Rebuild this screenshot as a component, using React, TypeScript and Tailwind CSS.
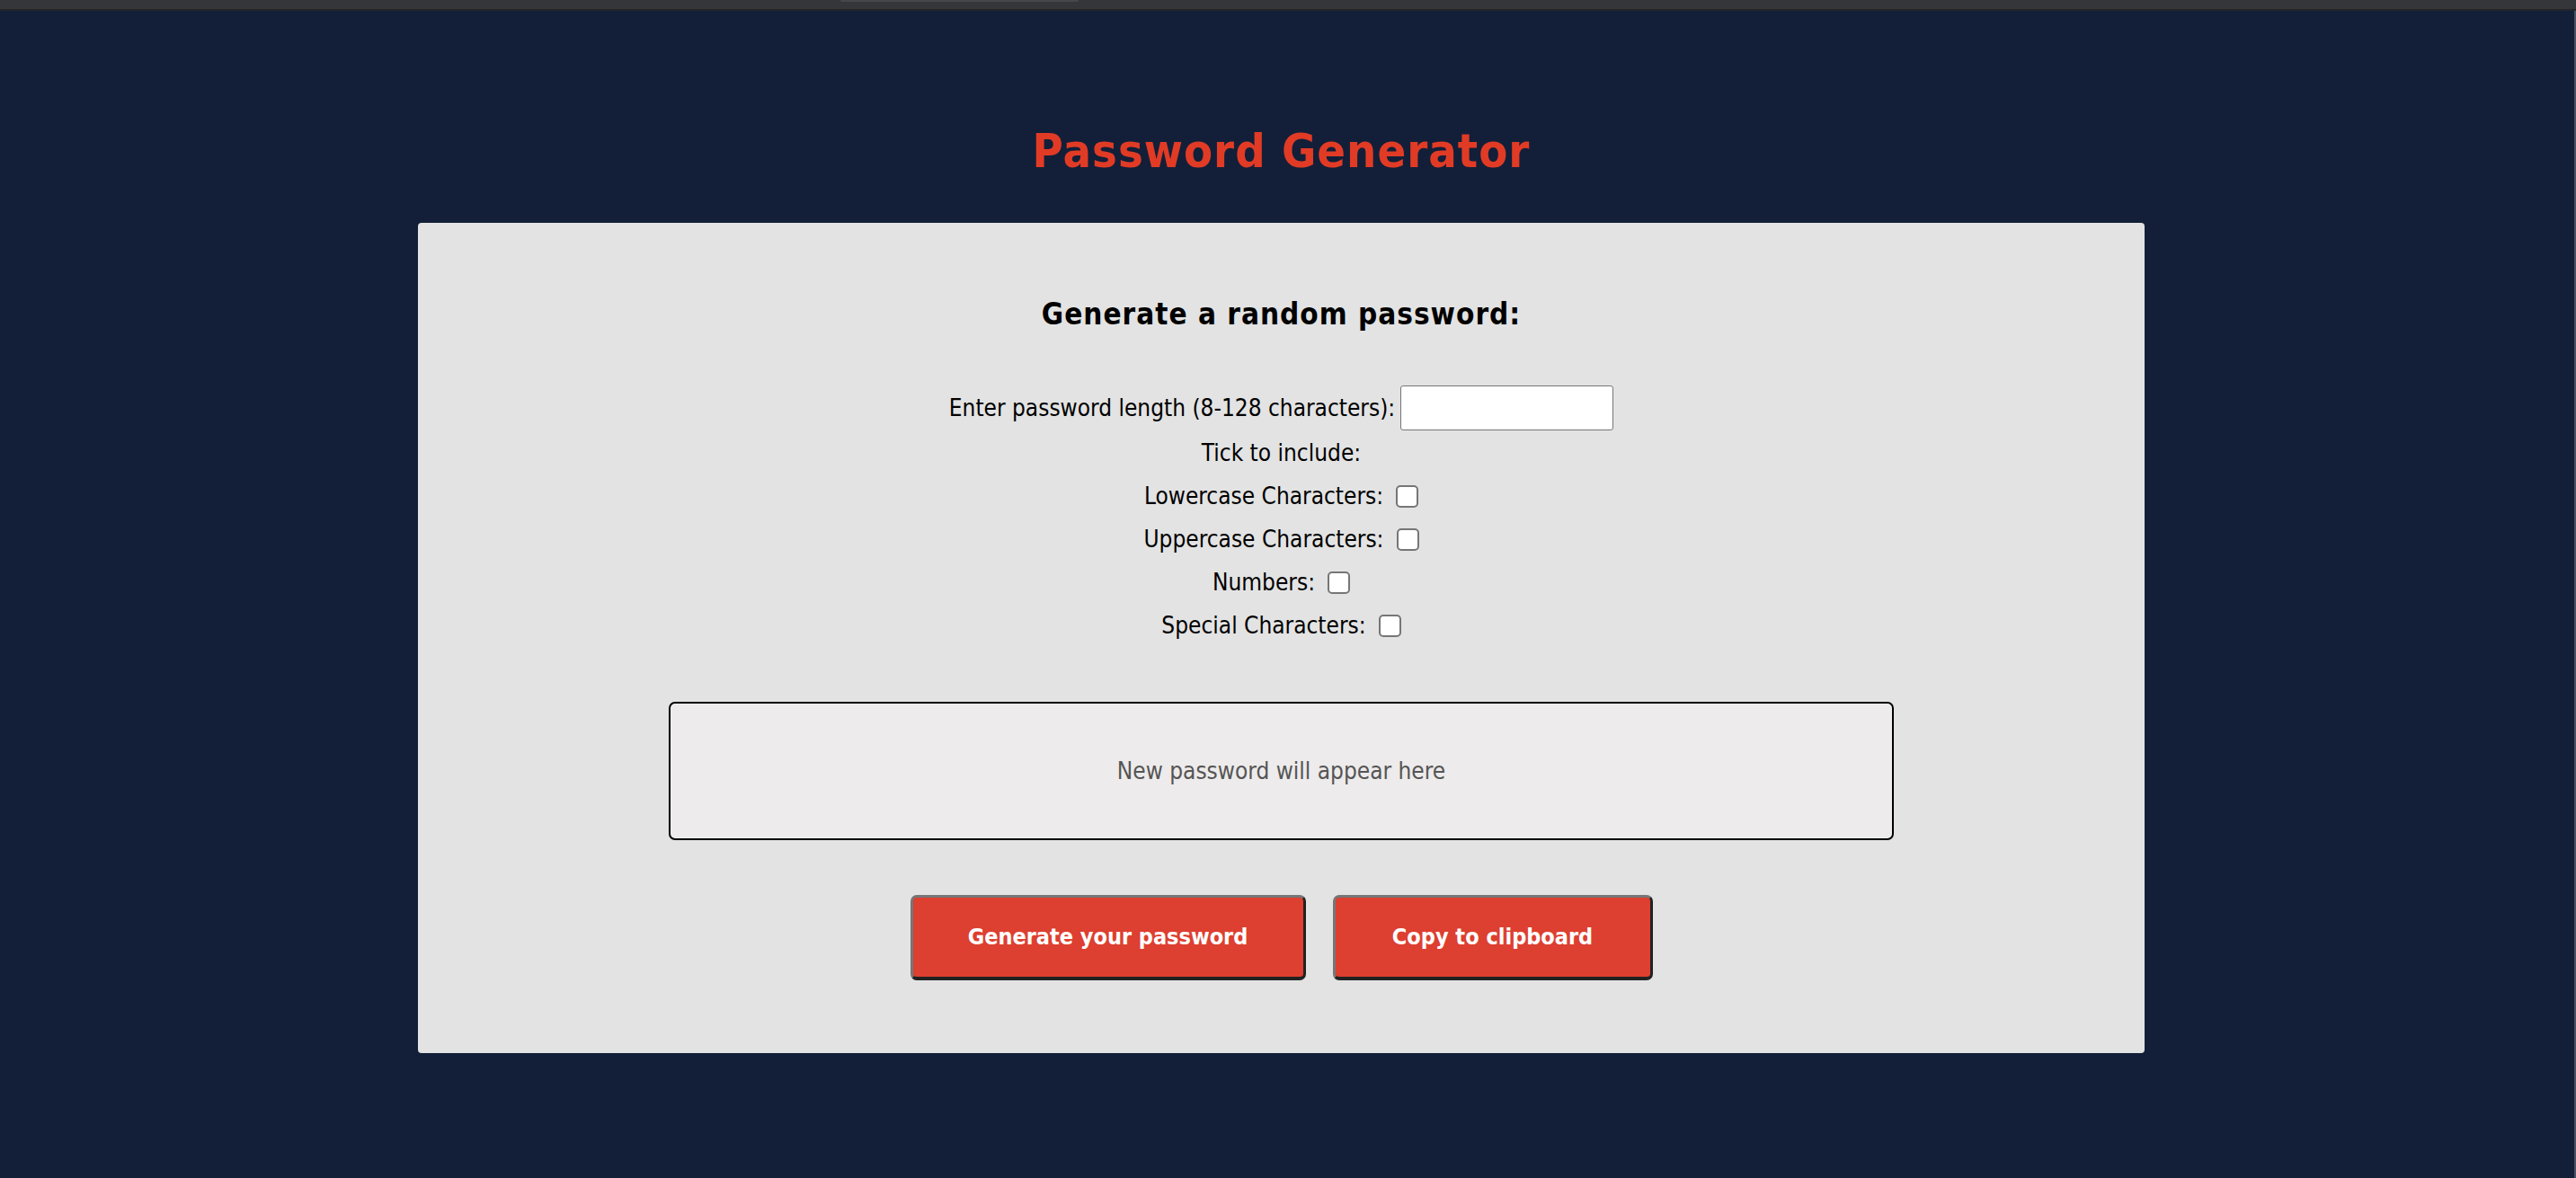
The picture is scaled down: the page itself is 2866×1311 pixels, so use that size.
import { useState } from "react";

const font = { fontFamily: '"DejaVu Sans Condensed", "Liberation Sans", sans-serif' };

const options = [
  { id: "lower", label: "Lowercase Characters:" },
  { id: "upper", label: "Uppercase Characters:" },
  { id: "numbers", label: "Numbers:" },
  { id: "special", label: "Special Characters:" },
];

export default function App() {
  const [length, setLength] = useState("");
  const [checked, setChecked] = useState<Record<string, boolean>>({});

  return (
    <div className="min-h-screen bg-[#131f38] flex flex-col" style={font}>
      {/* browser chrome strip */}
      <div className="h-[10px] bg-[#35363a] flex">
        <div className="ml-[935px] w-[265px] h-[2px] bg-[#46474b] rounded-b-md" />
      </div>
      <div className="h-[2px] bg-[#242527]" />

      <div className="flex flex-1">
        <main className="flex-1 flex flex-col items-center pr-[13px] pb-[139px]">
          <h1 className="mt-[124px] h-[64px] text-[52px] leading-[64px] font-bold tracking-[1px] text-[#e13b26]">
            Password Generator
          </h1>

          <section className="mt-[48px] w-[1921px] bg-[#e3e3e3] rounded-[4px] pt-[81px] pb-[81px] flex flex-col items-center">
            <h2 className="h-[42px] text-[33px] leading-[42px] font-bold tracking-[1px] text-black">
              Generate a random password:
            </h2>

            <div className="mt-[57px] flex flex-col items-center text-[26px] leading-none text-black">
              <div className="h-[52px] flex items-center gap-[6px]">
                <label htmlFor="len">Enter password length (8-128 characters):</label>
                <input
                  id="len"
                  value={length}
                  onChange={(e) => setLength(e.target.value)}
                  className="w-[237px] h-[50px] bg-white border border-[#767676] rounded-[3px] px-2 text-[24px] outline-none"
                />
              </div>
              <div className="h-[48px] flex items-center">Tick to include:</div>
              {options.map((o) => (
                <div key={o.id} className="h-[48px] flex items-center gap-[14px]">
                  <label htmlFor={o.id}>{o.label}</label>
                  <input
                    id={o.id}
                    type="checkbox"
                    checked={!!checked[o.id]}
                    onChange={() => setChecked({ ...checked, [o.id]: !checked[o.id] })}
                    className="appearance-none w-[25px] h-[25px] bg-white border-2 border-[#767676] rounded-[5px] checked:bg-[#1a73e8] checked:border-[#1a73e8]"
                  />
                </div>
              ))}
            </div>

            <div className="mt-[61px] w-[1363px] h-[154px] bg-[#edebeb] border-2 border-black rounded-[7px] flex items-center justify-center">
              <span className="text-[26px] leading-none text-[#555555]">New password will appear here</span>
            </div>

            <div className="mt-[61px] flex gap-[30px]">
              <button className="w-[440px] h-[95px] bg-[#dd3f30] text-white text-[25px] font-bold rounded-[7px] border-[3px] border-t-[#767676] border-l-[#767676] border-b-[#222222] border-r-[#222222] border-b-[4px]">
                Generate your password
              </button>
              <button className="w-[356px] h-[95px] bg-[#dd3f30] text-white text-[25px] font-bold rounded-[7px] border-[3px] border-t-[#767676] border-l-[#767676] border-b-[#222222] border-r-[#222222] border-b-[4px]">
                Copy to clipboard
              </button>
            </div>
          </section>
        </main>
        <div className="w-[2px] bg-[#4a5262]" />
      </div>
    </div>
  );
}
